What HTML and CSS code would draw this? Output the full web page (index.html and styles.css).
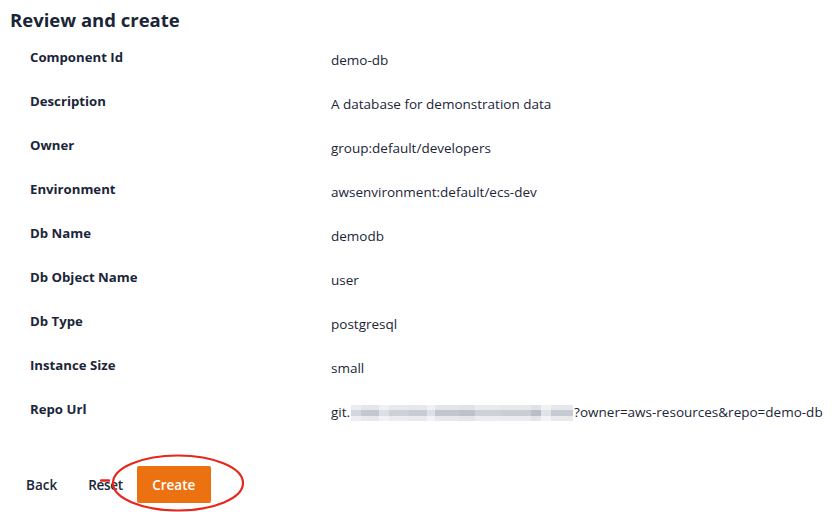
FILE: index.html
```html
<!DOCTYPE html>
<html>
<head>
<meta charset="utf-8">
<link rel="stylesheet" href="styles.css">
</head>
<body>
<div class="page">
  <h2 class="title">Review and create</h2>
  <div class="review">
    <div class="row"><div class="label">Component Id</div><div class="value">demo-db</div></div>
    <div class="row"><div class="label">Description</div><div class="value">A database for demonstration data</div></div>
    <div class="row"><div class="label">Owner</div><div class="value">group:default/developers</div></div>
    <div class="row"><div class="label">Environment</div><div class="value">awsenvironment:default/ecs-dev</div></div>
    <div class="row"><div class="label">Db Name</div><div class="value">demodb</div></div>
    <div class="row"><div class="label">Db Object Name</div><div class="value">user</div></div>
    <div class="row"><div class="label">Db Type</div><div class="value">postgresql</div></div>
    <div class="row"><div class="label">Instance Size</div><div class="value">small</div></div>
    <div class="row"><div class="label">Repo Url</div><div class="value">git.<span class="blur"></span>?owner=aws-resources&amp;repo=demo-db</div></div>
  </div>
  <div class="actions">
    <button class="btn btn-text btn-back">Back</button>
    <button class="btn btn-text btn-reset">Reset</button>
    <button class="btn btn-primary">Create</button>
    <svg class="circle" width="160" height="70" viewBox="0 0 160 70">
      <ellipse cx="78" cy="31" rx="65" ry="27.5" fill="none" stroke="#e8261c" stroke-width="2.2"/>
      <path d="M1 28.5 L9 28.5" stroke="#e8261c" stroke-width="2.4" stroke-linecap="round"/>
    </svg>
  </div>
</div>
</body>
</html>
```
FILE: styles.css
```css
html, body {
  margin: 0;
  padding: 0;
  background: #ffffff;
}
body {
  font-family: "Open Sans", "Noto Sans", sans-serif;
  color: #1a2638;
  width: 837px;
  height: 512px;
  overflow: hidden;
}
.page {
  padding: 6px 0 0 10px;
  position: relative;
}
.title {
  margin: 0;
  font-size: 18.5px;
  font-weight: 700;
  line-height: 28px;
  color: #1a2638;
}
.review {
  padding: 1px 0 0 20px;
}
.row {
  display: flex;
  height: 44px;
  align-items: flex-start;
}
.label {
  width: 301px;
  font-size: 13.2px;
  font-weight: 700;
  line-height: 20px;
  padding-top: 12px;
}
.value {
  font-size: 13.5px;
  font-weight: 400;
  line-height: 20px;
  padding-top: 15px;
  display: flex;
  align-items: center;
  white-space: nowrap;
}
.blur {
  display: inline-block;
  width: 222px;
  height: 16px;
  margin: 1px 1px 0 1px;
  background:
    linear-gradient(to bottom, rgba(255,255,255,0.55) 0, rgba(255,255,255,0.55) 5px, rgba(255,255,255,0) 5px, rgba(255,255,255,0) 11px, rgba(255,255,255,0.6) 11px),
    linear-gradient(to right,
      #d3d6dc 0, #d3d6dc 10px,
      #c3c8d0 10px, #c3c8d0 28px,
      #dcdfe4 28px, #dcdfe4 38px,
      #ccd0d7 38px, #ccd0d7 58px,
      #c7cbd3 58px, #c7cbd3 76px,
      #dde0e5 76px, #dde0e5 84px,
      #c2c7cf 84px, #c2c7cf 108px,
      #bcc1cb 108px, #bcc1cb 124px,
      #cdd1d8 124px, #cdd1d8 150px,
      #c9cdd4 150px, #c9cdd4 180px,
      #b8bec8 180px, #b8bec8 190px,
      #e1e3e7 190px, #e1e3e7 200px,
      #c6cad2 200px, #c6cad2 222px);
}
.actions {
  display: flex;
  align-items: center;
  margin-top: 35px;
  position: relative;
}
.btn {
  font-family: "Open Sans", "Noto Sans", sans-serif;
  font-size: 13.5px;
  line-height: 20px;
  border: none;
  background: none;
  cursor: pointer;
  height: 37px;
}
.btn-text {
  color: #1a2638;
  font-weight: 600;
}
.btn-back {
  padding: 0 16px;
}
.btn-reset {
  padding: 0 14px 0 15px;
  letter-spacing: -0.3px;
}
.btn-primary {
  background: #ec7211;
  color: #ffffff;
  padding: 0;
  border-radius: 2px;
  font-weight: 600;
  width: 74px;
  margin-left: 0;
}
.circle {
  position: absolute;
  left: 90px;
  top: -14px;
}
```
